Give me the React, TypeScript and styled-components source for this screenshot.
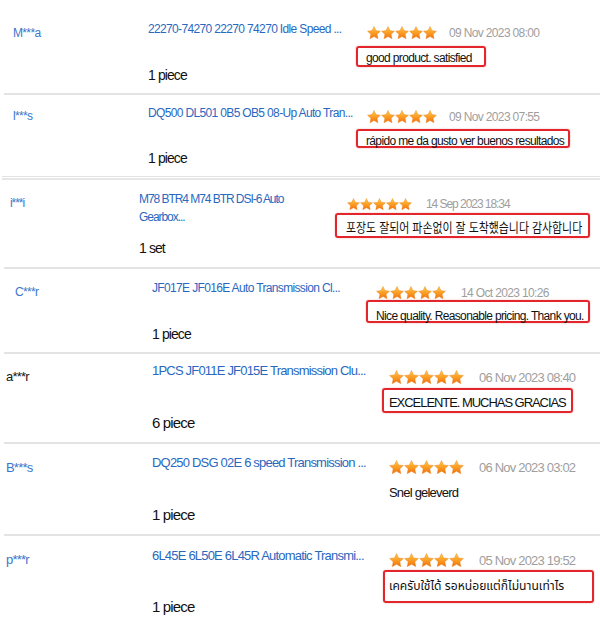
import React from "react";
import styled, { createGlobalStyle } from "styled-components";

const Global = createGlobalStyle`
  html, body { margin: 0; padding: 0; background: #fff; }
  body { font-family: "Liberation Sans", Arial, "Noto Sans CJK KR", sans-serif; color: #111; }
`;

const Page = styled.div`
  width: 600px;
  height: 634px;
  overflow: hidden;
  background: #fff;
`;

const Row = styled.div<{ $h: number }>`
  display: flex;
  height: ${(p) => p.$h}px;
  overflow: hidden;
`;

const Separator = styled.div`
  height: 2px;
  margin-left: 4px;
  background: #e3e3e3;
`;

const DoubleSeparator = styled.div`
  height: 4px;
  margin-left: 2px;
  box-sizing: border-box;
  border-top: 1px solid #e3e3e3;
  border-bottom: 2px solid #e6e6e6;
`;

const UserCol = styled.div<{ $x: number; $w: number; $top: number; $fs: number; $ls: number; $dark?: boolean }>`
  flex: 0 0 ${(p) => p.$w}px;
  box-sizing: border-box;
  padding-left: ${(p) => p.$x}px;
  padding-top: ${(p) => p.$top}px;
  font-size: ${(p) => p.$fs}px;
  line-height: ${(p) => p.$fs + 2}px;
  letter-spacing: ${(p) => p.$ls}px;
  color: ${(p) => (p.$dark ? "#151515" : "#3a76cc")};
`;

const ProductCol = styled.div<{ $w: number; $top: number }>`
  flex: 0 0 ${(p) => p.$w}px;
  display: flex;
  flex-direction: column;
  padding-top: ${(p) => p.$top}px;
`;

const Title = styled.div<{ $fs: number; $ls: number }>`
  font-size: ${(p) => p.$fs}px;
  line-height: 18px;
  letter-spacing: ${(p) => p.$ls}px;
  color: #2a68bf;
  white-space: pre-line;
`;

const Qty = styled.div<{ $fs: number; $ls: number; $gap: number }>`
  margin-top: ${(p) => p.$gap}px;
  font-size: ${(p) => p.$fs}px;
  line-height: ${(p) => p.$fs + 2}px;
  letter-spacing: ${(p) => p.$ls}px;
  color: #111;
`;

const ReviewCol = styled.div<{ $top: number }>`
  flex: 1;
  display: flex;
  flex-direction: column;
  align-items: flex-start;
  padding-top: ${(p) => p.$top}px;
`;

const StarsLine = styled.div<{ $inset: number; $gap: number }>`
  display: flex;
  align-items: center;
  padding-left: ${(p) => p.$inset}px;
  gap: ${(p) => p.$gap}px;
`;

const Stars = styled.div`
  display: flex;
`;

const DateText = styled.span<{ $fs: number; $ls: number }>`
  font-size: ${(p) => p.$fs}px;
  line-height: ${(p) => p.$fs + 2}px;
  letter-spacing: ${(p) => p.$ls}px;
  color: #9e9e9e;
`;

const Box = styled.div<{ $gap: number; $w: number; $h: number; $pad: number; $pt: number }>`
  margin-top: ${(p) => p.$gap}px;
  width: ${(p) => p.$w}px;
  height: ${(p) => p.$h}px;
  box-sizing: border-box;
  border: 2px solid #e2262b;
  border-radius: 3px;
  box-shadow: 0 0 2px rgba(200, 30, 30, 0.35);
  padding-left: ${(p) => p.$pad}px;
  padding-top: ${(p) => p.$pt}px;
  white-space: nowrap;
`;

const Plain = styled.div<{ $gap: number; $pad: number }>`
  margin-top: ${(p) => p.$gap}px;
  padding-left: ${(p) => p.$pad}px;
`;

const ReviewText = styled.span<{ $fs: number; $ls: number; $sx?: number }>`
  display: inline-block;
  font-size: ${(p) => p.$fs}px;
  line-height: ${(p) => p.$fs + 2}px;
  letter-spacing: ${(p) => p.$ls}px;
  color: #111;
  transform-origin: left center;
  transform: scaleX(${(p) => p.$sx ?? 1});
  white-space: nowrap;
  font-family: "Liberation Sans", Arial, "Noto Sans CJK KR", "Noto Sans Thai", "Noto Sans", "DejaVu Sans", sans-serif;
`;

const Star: React.FC<{ size: number; id: string }> = ({ size, id }) => (
  <svg width={size} height={size} viewBox="0 0 24 24">
    <defs>
      <linearGradient id={id} x1="0" y1="0" x2="0" y2="1">
        <stop offset="0" stopColor="#ffcc4a" />
        <stop offset="0.55" stopColor="#fb9a22" />
        <stop offset="1" stopColor="#ee6f0c" />
      </linearGradient>
    </defs>
    <path
      d="M12 0.8l3.35 7.05 7.75.95-5.7 5.35 1.48 7.65L12 18.05l-6.88 3.75 1.48-7.65L0.9 8.8l7.75-.95z"
      fill={`url(#${id})`}
      stroke="#e8780f"
      strokeWidth="0.6"
      strokeLinejoin="round"
    />
  </svg>
);

type Review = {
  h: number;
  sep: "single" | "double" | "none";
  user: string;
  dark?: boolean;
  userX: number;
  userTop: number;
  productX: number;
  productTop: number;
  title: string;
  lines: number;
  qty: string;
  qtyTop: number;
  reviewX: number;
  starsTop: number;
  starsInset: number;
  starSize: number;
  dateGap: number;
  date: string;
  text: string;
  boxed: boolean;
  boxTop: number;
  boxW: number;
  boxH: number;
  textPad: number;
  textTop: number;
  fs: number;
  ls: number;
  qfs: number;
  qls: number;
  tfs?: number;
  tls?: number;
  tsx?: number;
};

const small = { fs: 12, ls: -0.65, qfs: 14, qls: -0.9 };
const big = { fs: 13, ls: -0.8, qfs: 15, qls: -0.85 };

const reviews: Review[] = [
  {
    ...small, h: 93, sep: "single", user: "M***a", userX: 13, userTop: 26,
    productX: 148, productTop: 20, title: "22270-74270 22270 74270 Idle Speed ...", lines: 1,
    qty: "1 piece", qtyTop: 67, reviewX: 356, starsTop: 26, starsInset: 11, starSize: 14, dateGap: 12,
    date: "09 Nov 2023 08:00", text: "good product. satisfied", boxed: true, boxTop: 46, boxW: 130, boxH: 21,
    textPad: 8, textTop: 0,
  },
  {
    ...small, h: 81, sep: "double", user: "l***s", userX: 13, userTop: 14,
    productX: 148, productTop: 9, title: "DQ500 DL501 0B5 OB5 08-Up Auto Tran...", lines: 1,
    qty: "1 piece", qtyTop: 55, reviewX: 356, starsTop: 15, starsInset: 11, starSize: 14, dateGap: 12,
    date: "09 Nov 2023 07:55", text: "rápido me da gusto ver buenos resultados", boxed: true, boxTop: 34, boxW: 214, boxH: 19,
    textPad: 8, textTop: 0,
  },
  {
    ...small, ls: -1.05, h: 87, sep: "single", user: "i***i", userX: 10, userTop: 16,
    productX: 139, productTop: 10, title: "M78 BTR4 M74 BTR DSI-6 Auto\nGearbox...", lines: 2,
    qty: "1 set", qtyTop: 60, reviewX: 335, starsTop: 17, starsInset: 12, starSize: 13, dateGap: 14,
    date: "14 Sep 2023 18:34", text: "포장도 잘되어 파손없이 잘 도착했습니다 감사합니다", boxed: true, boxTop: 32, boxW: 255, boxH: 25,
    textPad: 9, textTop: 3, tfs: 13, tls: 0, tsx: 0.84,
  },
  {
    ...small, h: 83, sep: "single", user: "C***r", userX: 15, userTop: 16,
    productX: 152, productTop: 10, title: "JF017E JF016E Auto Transmission Cl...", lines: 1,
    qty: "1 piece", qtyTop: 57, reviewX: 366, starsTop: 17, starsInset: 10, starSize: 14, dateGap: 15,
    date: "14 Oct 2023 10:26", text: "Nice quality. Reasonable pricing. Thank you.", boxed: true, boxTop: 31, boxW: 224, boxH: 23,
    textPad: 8, textTop: 4,
  },
  {
    ...big, h: 88, sep: "single", user: "a***r", dark: true, userX: 6, userTop: 15,
    productX: 152, productTop: 8, title: "1PCS JF011E JF015E Transmission Clu...", lines: 1,
    qty: "6 piece", qtyTop: 60, reviewX: 382, starsTop: 16, starsInset: 7, starSize: 15, dateGap: 15,
    date: "06 Nov 2023 08:40", text: "EXCELENTE. MUCHAS GRACIAS", boxed: true, boxTop: 34, boxW: 191, boxH: 25,
    textPad: 5, textTop: 3, tls: -1.05,
  },
  {
    ...big, h: 90, sep: "single", user: "B***s", userX: 6, userTop: 16,
    productX: 152, productTop: 10, title: "DQ250 DSG 02E 6 speed Transmission ...", lines: 1,
    qty: "1 piece", qtyTop: 62, reviewX: 382, starsTop: 16, starsInset: 7, starSize: 15, dateGap: 15,
    date: "06 Nov 2023 03:02", text: "Snel geleverd", boxed: false, boxTop: 39, boxW: 0, boxH: 0,
    textPad: 7, textTop: 0,
  },
  {
    ...big, h: 98, sep: "none", user: "p***r", userX: 6, userTop: 16,
    productX: 152, productTop: 11, title: "6L45E 6L50E 6L45R Automatic Transmi...", lines: 1,
    qty: "1 piece", qtyTop: 62, reviewX: 383, starsTop: 17, starsInset: 6, starSize: 15, dateGap: 15,
    date: "05 Nov 2023 19:52", text: "เคครับใช้ได้ รอหน่อยแต่ก็ไม่นานเท่าไร", boxed: true, boxTop: 34, boxW: 211, boxH: 33,
    textPad: 4, textTop: 4, tls: 0, tsx: 0.93,
  },
];

const ReviewRow: React.FC<{ r: Review; idx: number }> = ({ r, idx }) => {
  const qtyGap = r.qtyTop - r.productTop - 18 * r.lines;
  const starsBottom = r.starsTop + r.starSize;
  const text = (
    <ReviewText $fs={r.tfs ?? r.fs} $ls={r.tls ?? r.ls} $sx={r.tsx}>
      {r.text}
    </ReviewText>
  );
  return (
    <Row $h={r.h}>
      <UserCol $x={r.userX} $w={r.productX} $top={r.userTop} $fs={r.fs} $ls={r.ls} $dark={r.dark}>
        {r.user}
      </UserCol>
      <ProductCol $w={r.reviewX - r.productX} $top={r.productTop}>
        <Title $fs={r.fs} $ls={r.ls}>{r.title}</Title>
        <Qty $fs={r.qfs} $ls={r.qls} $gap={qtyGap}>{r.qty}</Qty>
      </ProductCol>
      <ReviewCol $top={r.starsTop}>
        <StarsLine $inset={r.starsInset} $gap={r.dateGap}>
          <Stars>
            {[0, 1, 2, 3, 4].map((i) => (
              <Star key={i} size={r.starSize} id={`g${idx}-${i}`} />
            ))}
          </Stars>
          <DateText $fs={r.fs} $ls={r.ls}>{r.date}</DateText>
        </StarsLine>
        {r.boxed ? (
          <Box $gap={r.boxTop - starsBottom} $w={r.boxW} $h={r.boxH} $pad={r.textPad} $pt={r.textTop}>
            {text}
          </Box>
        ) : (
          <Plain $gap={r.boxTop - starsBottom} $pad={r.textPad}>{text}</Plain>
        )}
      </ReviewCol>
    </Row>
  );
};

export default function App() {
  return (
    <>
      <Global />
      <Page>
        {reviews.map((r, i) => (
          <React.Fragment key={i}>
            <ReviewRow r={r} idx={i} />
            {r.sep === "single" && <Separator />}
            {r.sep === "double" && <DoubleSeparator />}
          </React.Fragment>
        ))}
      </Page>
    </>
  );
}
